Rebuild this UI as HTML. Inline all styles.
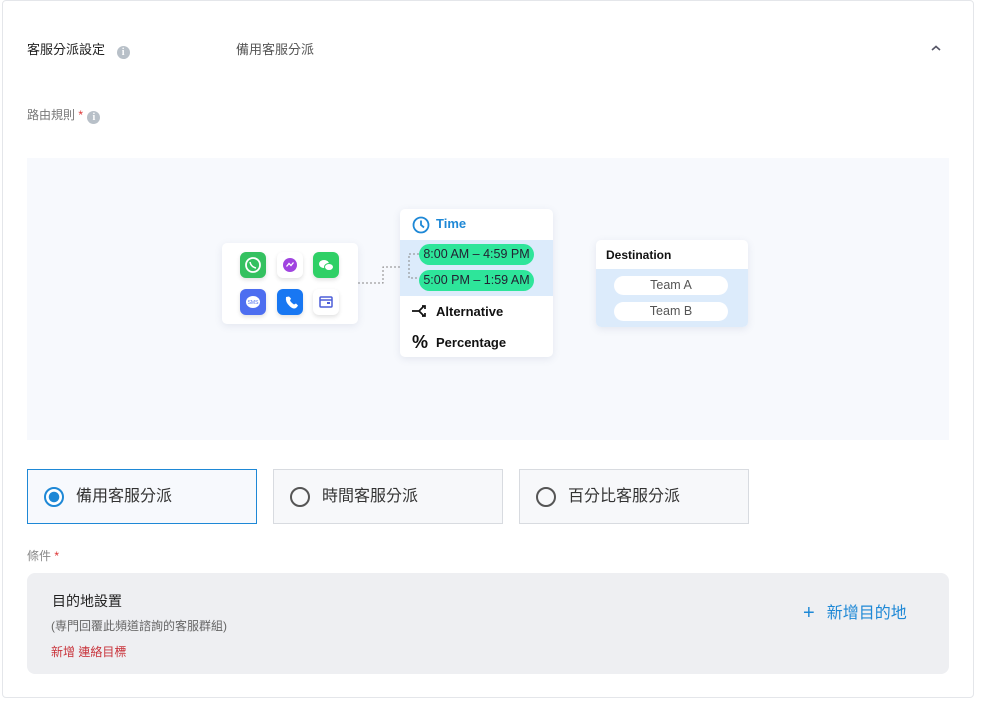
<!DOCTYPE html>
<html><head><meta charset="utf-8"><style>
*{margin:0;padding:0;box-sizing:border-box}
body{width:982px;height:701px;background:#fff;font-family:"Liberation Sans","Noto Sans CJK TC",sans-serif;position:relative;overflow:hidden;color:#222}
.a{position:absolute}
.frame{left:2px;top:0px;width:972px;height:698px;border:1px solid #e4e6ea;border-radius:4px}
.info{display:inline-block;width:13px;height:13px;border-radius:50%;background:#b8c0c8;color:#fff;font-size:10px;font-weight:bold;text-align:center;line-height:13px;font-family:"Liberation Serif",serif;vertical-align:-1px}
.card{background:#fff;border-radius:5px;box-shadow:0 2px 8px rgba(80,100,140,.12)}
.ic{position:absolute;width:26px;height:26px;border-radius:6px;box-shadow:0 2px 4px rgba(0,0,0,.12)}
.pill{position:absolute;left:19px;width:115px;height:21px;border-radius:11px;background:#2ee59a;font-size:12.5px;text-align:center;line-height:21px;color:#223}
.team{position:absolute;left:18px;width:114px;height:19px;border-radius:10px;background:#fff;font-size:12.5px;text-align:center;line-height:19px;color:#555}
.rad{position:absolute;top:469px;height:55px;border:1px solid #d8dbe0;background:#f7f8fa;font-size:16px;color:#333;line-height:53px;padding-left:48px}
.rad i{position:absolute;left:16px;top:17px;width:20px;height:20px;border-radius:50%;border:2px solid #555}
</style></head><body>
<div class="a frame"></div>
<div class="a" style="left:27px;top:39px;font-size:13px;color:#222">客服分派設定 <span class="info" style="margin-left:8px">i</span></div>
<div class="a" style="left:236px;top:39px;font-size:13px;color:#555">備用客服分派</div>
<svg class="a" style="left:930px;top:44px" width="12" height="8"><path d="M2 6L6 2.5 10 6" stroke="#556" stroke-width="1.6" fill="none"/></svg>
<div class="a" style="left:27px;top:106px;font-size:12px;color:#777">路由規則 <span style="color:#d33">*</span> <span class="info" style="margin-left:1px">i</span></div>

<div class="a" style="left:27px;top:158px;width:922px;height:282px;background:#f7f9fd"></div>
<svg class="a" style="left:358px;top:250px" width="62" height="40"><path d="M0 33H25V17H45M45 17V4H62M45 17V30H62" stroke="#888" stroke-dasharray="2 2" fill="none"/></svg>
<svg class="a" style="left:534px;top:250px" width="16" height="10"><path d="M0 4H13V9" stroke="#888" stroke-dasharray="2 2" fill="none"/></svg>
<div class="a card" style="left:222px;top:243px;width:136px;height:81px">
 <div class="ic" style="left:18px;top:9px;background:#34c160"><svg width="26" height="26"><circle cx="13" cy="13" r="7" stroke="#fff" stroke-width="1.8" fill="none"/><path d="M10 10q1 5 6 6" stroke="#fff" stroke-width="1.5" fill="none"/></svg></div>
 <div class="ic" style="left:55px;top:9px;background:#fff"><svg width="26" height="26"><circle cx="13" cy="13" r="7" fill="#a044e0"/><path d="M9.5 14.5l2.5-3 2 2 2.5-3" stroke="#fff" stroke-width="1.3" fill="none"/></svg></div>
 <div class="ic" style="left:91px;top:9px;background:#2fd066"><svg width="26" height="26"><ellipse cx="11" cy="12" rx="5" ry="4" fill="#fff"/><ellipse cx="16" cy="15" rx="4.5" ry="3.5" fill="#fff" stroke="#2fd066"/></svg></div>
 <div class="ic" style="left:18px;top:46px;background:#4d6ef0"><svg width="26" height="26"><ellipse cx="13" cy="13" rx="7" ry="6" fill="#fff"/><text x="13" y="15" font-size="5" text-anchor="middle" fill="#4d6ef0" font-family="Liberation Sans">SMS</text></svg></div>
 <div class="ic" style="left:55px;top:46px;background:#1877f2"><svg width="26" height="26"><path d="M9 8q-1 5 4 9.5t8-1l-2-2-2 1q-3-2-4-4l1-2-2-2z" fill="#fff"/></svg></div>
 <div class="ic" style="left:91px;top:46px;background:#fff"><svg width="26" height="26"><rect x="7" y="8" width="12" height="10" rx="1" stroke="#4d5ed8" stroke-width="1.5" fill="none"/><path d="M7 11H19" stroke="#4d5ed8" stroke-width="1.5"/><rect x="14" y="13" width="3" height="2" fill="#4d5ed8"/></svg></div>
</div>

<div class="a card" style="left:400px;top:209px;width:153px;height:148px;overflow:hidden">
 <svg class="a" style="left:12px;top:7px" width="18" height="18"><circle cx="9" cy="9" r="7.5" stroke="#1e88d6" stroke-width="1.8" fill="none"/><path d="M9 4.5V9l3 2.5" stroke="#1e88d6" stroke-width="1.8" fill="none"/></svg>
 <div class="a" style="left:36px;top:7px;font-size:13px;font-weight:bold;color:#1e88d6">Time</div>
 <div class="a" style="left:0;top:31px;width:153px;height:56px;background:#dcebfb"></div>
 <svg class="a" style="left:6px;top:41px" width="14" height="32"><path d="M13 4H3V28H13" stroke="#888" stroke-dasharray="2 2" fill="none"/></svg>
 <div class="pill" style="top:35px">8:00 AM – 4:59 PM</div>
 <div class="pill" style="top:61px">5:00 PM – 1:59 AM</div>
 <svg class="a" style="left:11px;top:95px" width="18" height="14"><path d="M1 7H8l5-5M8 7l5 5M11 2h3v3M11 12h3V9" stroke="#111" stroke-width="1.7" fill="none"/></svg>
 <div class="a" style="left:36px;top:95px;font-size:13px;font-weight:bold;color:#111">Alternative</div>
 <div class="a" style="left:12px;top:123px;font-size:18px;font-weight:bold;color:#111">%</div>
 <div class="a" style="left:36px;top:126px;font-size:13px;font-weight:bold;color:#111">Percentage</div>
</div>

<div class="a card" style="left:596px;top:240px;width:152px;height:87px;overflow:hidden">
 <div class="a" style="left:10px;top:8px;font-size:12px;font-weight:bold;color:#111">Destination</div>
 <div class="a" style="left:0;top:29px;width:152px;height:58px;background:#dcebfb"></div>
 <div class="team" style="top:36px">Team A</div>
 <div class="team" style="top:62px">Team B</div>
</div>

<div class="rad" style="left:27px;width:230px;border-color:#1e88d6;background:#f7f9fd"><i style="border-color:#1e88d6;background:radial-gradient(circle,#1e88d6 0 5px,#fff 5.5px)"></i>備用客服分派</div>
<div class="rad" style="left:273px;width:230px"><i></i>時間客服分派</div>
<div class="rad" style="left:519px;width:230px"><i></i>百分比客服分派</div>

<div class="a" style="left:27px;top:547px;font-size:12px;color:#888">條件 <span style="color:#d33">*</span></div>
<div class="a" style="left:27px;top:573px;width:922px;height:101px;background:#eeeff2;border-radius:8px"></div>
<div class="a" style="left:52px;top:591px;font-size:14px;color:#222">目的地設置</div>
<div class="a" style="left:51px;top:617px;font-size:12px;color:#666">(専門回覆此頻道諮詢的客服群組)</div>
<div class="a" style="left:51px;top:643px;font-size:12px;color:#c8323a">新增 連絡目標</div>
<div class="a" style="left:803px;top:599px;font-size:16px;color:#1e88d6"><span style="font-size:20px;margin-right:12px;vertical-align:-1px">+</span>新增目的地</div>
</body></html>
